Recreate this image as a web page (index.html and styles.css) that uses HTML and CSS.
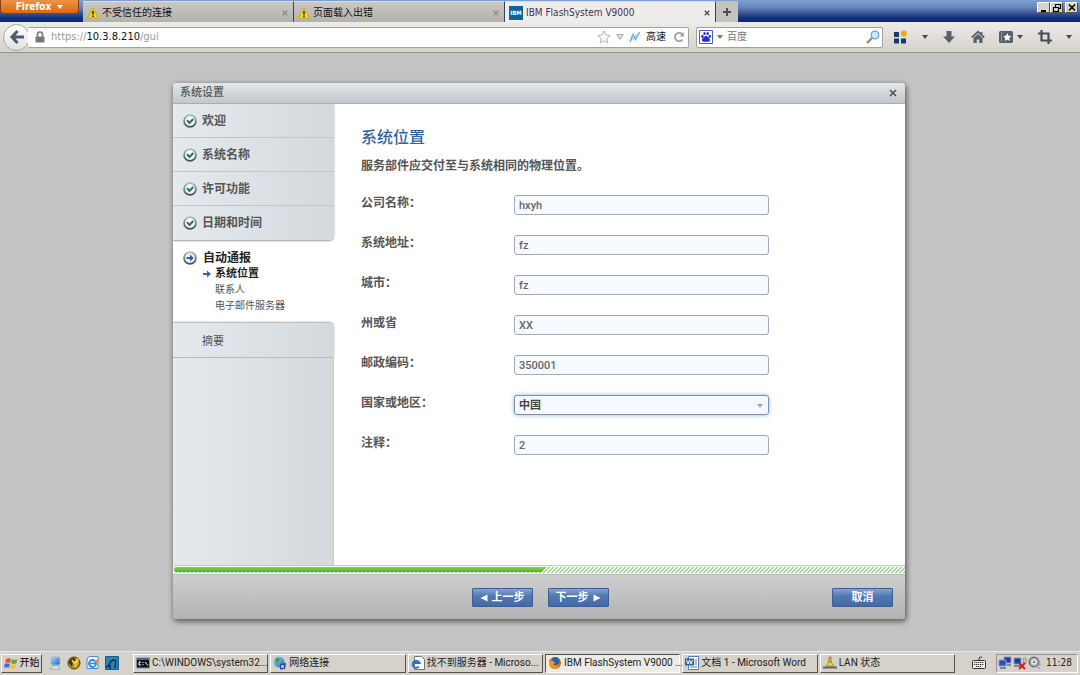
FILE: index.html
```html
<!DOCTYPE html>
<html lang="zh-CN">
<head>
<meta charset="utf-8">
<title>IBM FlashSystem V9000</title>
<link rel="stylesheet" href="styles.css">
</head>
<body>
<svg class="defs" aria-hidden="true">
  <defs>
    <linearGradient id="ring" x1="0" y1="0" x2="0" y2="1"><stop offset="0" stop-color="#b4b8bb"/><stop offset="1" stop-color="#4a4e52"/></linearGradient>
    <linearGradient id="sky" x1="0" y1="0" x2="1" y2="1"><stop offset="0" stop-color="#a8dcf8"/><stop offset="1" stop-color="#1c62c0"/></linearGradient>
    <symbol id="warn" viewBox="0 0 12 12"><path d="M6 1 11.5 11H.5Z" fill="#f8d80c" stroke="#c7a400" stroke-width=".8" stroke-linejoin="round"/><path d="M6 4v3.6M6 8.6v1.4" stroke="#222" stroke-width="1.5"/></symbol>
    <symbol id="check" viewBox="0 0 14 14"><circle cx="7" cy="7" r="5.9" fill="#f3f8f8" stroke="url(#ring)" stroke-width="1.8"/><path d="M4 6.2 6.5 9 10.2 5" fill="none" stroke="#23775c" stroke-width="2"/></symbol>
    <symbol id="down" viewBox="0 0 6 4"><path d="M0 0h6L3 4Z" fill="currentColor"/></symbol>
    <symbol id="x" viewBox="0 0 8 8"><path d="M1 1l6 6M7 1 1 7" stroke="currentColor" stroke-width="1.700"/></symbol>
  </defs>
</svg>

<header class="tabbar">
  <button class="firefox" type="button">Firefox <svg class="caret"><use href="#down"/></svg></button>
  <nav class="tabs">
    <div class="tab"><svg class="i12"><use href="#warn"/></svg><span class="tab-name">不受信任的连接</span><button class="tab-close" type="button" aria-label="关闭标签页"><svg class="i8"><use href="#x"/></svg></button></div>
    <div class="tab"><svg class="i12"><use href="#warn"/></svg><span class="tab-name">页面载入出错</span><button class="tab-close" type="button" aria-label="关闭标签页"><svg class="i8"><use href="#x"/></svg></button></div>
    <div class="tab tab-active"><span class="ibm">IBM</span><span class="tab-name">IBM FlashSystem V9000</span><button class="tab-close" type="button" aria-label="关闭标签页"><svg class="i8"><use href="#x"/></svg></button></div>
    <button class="tab-new" type="button" aria-label="新标签页"><svg class="i10" viewBox="0 0 10 10"><path d="M5 1v8M1 5h8" stroke="#4b535a" stroke-width="2"/></svg></button>
  </nav>
  <div class="win-controls">
    <button type="button" aria-label="最小化"><svg class="i10" viewBox="0 0 10 10"><path d="M2 8h5" stroke="#000" stroke-width="2"/></svg></button>
    <button type="button" aria-label="还原"><svg class="i10" viewBox="0 0 10 10"><path d="M3.5 4V1.5h5v4H7M1.5 4.5h5v4h-5zM3 1.5h6M1 4.5h6" fill="none" stroke="#000" stroke-width="1.2"/></svg></button>
    <button type="button" aria-label="关闭"><svg class="i10" viewBox="0 0 10 10"><path d="M2 1.500l6 6M8 1.500l-6 6" stroke="#000" stroke-width="1.600"/></svg></button>
  </div>
</header>

<div class="navbar">
  <button class="back" type="button" aria-label="后退"><svg class="i16" viewBox="0 0 16 16"><path d="M8.5 2 3 8l5.500 6M3 8h12" fill="none" stroke="#4a5d70" stroke-width="3"/></svg></button>
  <div class="url">
    <svg class="i12" viewBox="0 0 12 12"><path d="M3.500 6V3.500a2.500 2.500 0 0 1 5 0V6" fill="none" stroke="#777" stroke-width="1.6"/><rect x="1.500" y="5.500" width="9" height="6" rx="1" fill="#777"/></svg>
    <span class="address">https://<span class="host">10.3.8.210</span>/gui</span>
    <svg class="i14" viewBox="0 0 14 14"><path d="M7 1l1.800 4 4.400.5-3.300 3 1 4.400L7 10.700 3.100 12.900l1-4.400-3.300-3L5.200 5Z" fill="#fafafa" stroke="#b5b5b5"/></svg>
    <svg class="i8" viewBox="0 0 8 8"><path d="M.7 1.500h6.600L4 6.500Z" fill="#e0e0e0" stroke="#aaa"/></svg>
    <svg class="i12" viewBox="0 0 12 12"><path d="M1 11 4 3.500l2.500 5L10.500 1" fill="none" stroke="#64a5e4" stroke-width="1.500"/><path d="M4 3v6M7 3v5" stroke="#91c3f0"/></svg>
    <span class="speed">高速</span>
    <button class="bare" type="button" aria-label="重新载入"><svg class="i12" viewBox="0 0 12 12"><path d="M9.500 8.500A4.200 4.200 0 1 1 9 3" fill="none" stroke="#929ba4" stroke-width="1.700"/><path d="M10.800 1v4.500H6.500Z" fill="#929ba4"/></svg></button>
  </div>
  <label class="search">
    <svg class="i14" viewBox="0 0 14 14"><path d="M.5.5h13v13H.5z" fill="#fff" stroke="#4061bd"/><g fill="#252ed4"><ellipse cx="3.400" cy="6.300" rx="1.200" ry="1.600"/><ellipse cx="5.500" cy="3.500" rx="1.200" ry="1.600"/><ellipse cx="8.700" cy="3.500" rx="1.200" ry="1.600"/><ellipse cx="10.800" cy="6.300" rx="1.200" ry="1.600"/><path d="M7 6c1.700 0 4 2.500 4 4.200 0 2-2.500 1.500-4 1.500s-4 .5-4-1.500C3 8.500 5.300 6 7 6Z"/></g></svg>
    <svg class="caret"><use href="#down"/></svg>
    <input type="text" placeholder="百度" aria-label="搜索">
    <svg class="i14" viewBox="0 0 14 14"><path d="M1 13 6 8" stroke="#bb7a62" stroke-width="2.400"/><circle cx="9" cy="5" r="3.800" fill="#c8e9fa" stroke="#6ba1d0" stroke-width="1.300"/></svg>
  </label>
  <div class="tools">
    <button class="bare" type="button" aria-label="快速拨号"><svg class="i14" viewBox="0 0 14 14"><path d="M1 2h5v5H1zM1 8.500h5v5H1zM8 8.500h5v5H8z" fill="#183870"/><circle cx="10.800" cy="3.500" r="3" fill="#f5a21c"/></svg></button>
    <svg class="caret"><use href="#down"/></svg>
    <button class="bare" type="button" aria-label="下载"><svg class="i14" viewBox="0 0 14 14"><path d="M4.500 1h5v5.500H13L7 13 1 6.500h3.500Z" fill="#56616c"/></svg></button>
    <button class="bare" type="button" aria-label="主页"><svg class="i14" viewBox="0 0 14 14"><path d="M.8 7.500 7 1.700l6.200 5.800M10.500 2v3" fill="none" stroke="#56616c" stroke-width="1.800"/><path d="M2.500 8 7 4l4.500 4v5H8.300V9.500H5.700V13H2.500Z" fill="#56616c"/></svg></button>
    <button class="bare pair" type="button" aria-label="书签"><svg class="i14" viewBox="0 0 14 14"><rect y="1" width="14" height="12" rx="1.500" fill="#56616c"/><path d="M2.500 2v10" stroke="#8f99a2"/><path d="M8.300 3l1.200 2.700 3 .3-2.200 2 .6 3-2.600-1.600L5.700 11l.6-3-2.200-2 3-.3Z" fill="#fff"/></svg><svg class="caret"><use href="#down"/></svg></button>
    <button class="bare" type="button" aria-label="截图"><svg class="i14" viewBox="0 0 14 14"><path d="M3.500 0v10.500H14M0 3.500h10.500V14" fill="none" stroke="#464d54" stroke-width="2.200"/></svg></button>
    <svg class="caret"><use href="#down"/></svg>
  </div>
</div>

<main class="page">
  <section class="dialog">
    <header class="dialog-head"><span>系统设置</span><button class="bare" type="button" aria-label="关闭"><svg class="i8"><use href="#x"/></svg></button></header>
    <div class="dialog-body">
      <aside class="steps">
        <ul class="done">
          <li><svg class="i14"><use href="#check"/></svg>欢迎</li>
          <li><svg class="i14"><use href="#check"/></svg>系统名称</li>
          <li><svg class="i14"><use href="#check"/></svg>许可功能</li>
          <li><svg class="i14"><use href="#check"/></svg>日期和时间</li>
        </ul>
        <div class="current">
          <div class="current-name"><svg class="i14" viewBox="0 0 14 14"><circle cx="7" cy="7" r="5.900" fill="#eef3fa" stroke="url(#ring)" stroke-width="1.800"/><path d="M3.500 6H7V3.500L10.800 7 7 10.500V8H3.500Z" fill="#315fae"/></svg>自动通报</div>
          <ul class="substeps">
            <li class="sub-active"><svg class="i8" viewBox="0 0 8 8"><path d="M0 3h4V.5L8 4 4 7.500V5H0Z" fill="#3767ad"/></svg>系统位置</li>
            <li>联系人</li>
            <li>电子邮件服务器</li>
          </ul>
        </div>
        <div class="next-step">摘要</div>
        <div class="steps-rest"></div>
      </aside>
      <form class="content" id="location">
        <h1>系统位置</h1>
        <p>服务部件应交付至与系统相同的物理位置。</p>
        <div class="fields">
          <label for="company">公司名称：</label><input id="company" type="text" value="hxyh">
          <label for="addr">系统地址：</label><input id="addr" type="text" value="fz">
          <label for="city">城市：</label><input id="city" type="text" value="fz">
          <label for="state">州或省</label><input id="state" type="text" value="XX">
          <label for="zip">邮政编码：</label><input id="zip" type="text" value="350001">
          <label for="country">国家或地区：</label>
          <div class="select"><select id="country"><option>中国</option></select><svg class="caret"><use href="#down"/></svg></div>
          <label for="note">注释：</label><input id="note" type="text" value="2">
        </div>
      </form>
    </div>
    <div class="progress"><div class="track"><div class="bar"></div></div></div>
    <footer class="dialog-foot">
      <div class="pager">
        <button class="btn" type="button"><svg class="i8" viewBox="0 0 8 8"><path d="M7.500.5v7L.5 4Z" fill="#fff"/></svg>上一步</button>
        <button class="btn" type="button">下一步<svg class="i8" viewBox="0 0 8 8"><path d="M.5.500v7l7-3.500Z" fill="#fff"/></svg></button>
      </div>
      <button class="btn" type="button">取消</button>
    </footer>
  </section>
</main>

<footer class="taskbar">
  <button class="start" type="button"><svg class="i14" viewBox="0 0 14 14"><path d="M2 3q2.500-1.500 5 0L6 7Q3.500 5.500 1 7Z" fill="#e2552b"/><path d="M8 3.200q2.500 1.300 5.500 0l-1.200 4Q9.500 8.500 7 7.200Z" fill="#58aa3b"/><path d="M.8 8q2.500-1.500 5 0l-1 4Q2.500 10.500 0 12Z" fill="#3a70d3"/><path d="M6.800 8.200q2.500 1.300 5.300 0l-1 4q-2.800 1.300-5.300 0Z" fill="#f4c02c"/></svg>开始</button>
  <div class="quick">
    <svg class="i14" viewBox="0 0 14 14"><rect x="3" y="1" width="9" height="8" rx="1.500" fill="url(#sky)" stroke="#a7b9cc"/><path d="M5 10h5l2 3H2Z" fill="#e9eff6" stroke="#7591b5" stroke-width=".7"/></svg>
    <svg class="i14" viewBox="0 0 14 14"><circle cx="7" cy="7" r="6" fill="#b9950c" stroke="#4b3b07"/><path d="M2 7a5 5 0 0 1 5-5l3 3-4 1-1 5Z" fill="#3c3211"/><path d="M5 4l2 3 4-4-3 8" fill="none" stroke="#f4dc60" stroke-width="1.500"/></svg>
    <svg class="i14" viewBox="0 0 14 14"><path d="M3 .5h9v12H1V3Z" fill="#edf6ff" stroke="#5389cc"/><circle cx="6.500" cy="7.500" r="3.500" fill="none" stroke="#278be0" stroke-width="1.800"/><path d="M4 7.500h5" stroke="#278be0" stroke-width="1.500"/><path d="M8 6l5-4v4Z" fill="#e28857"/></svg>
    <svg class="i14" viewBox="0 0 14 14"><path d="M.5.500h13v13H.5z" fill="#2885b3" stroke="#145e85"/><path d="M1 11c4 0 3-7 8-7 3 0 1 5 1 8M5 9v4" fill="none" stroke="#0b304b" stroke-width="1.500"/></svg>
  </div>
  <div class="tasks">
    <button class="task" type="button"><svg class="i14" viewBox="0 0 14 14"><path d="M.5 2h13v10H.5z" fill="#111" stroke="#7195bf"/><path d="M1 3h12" stroke="#386baa" stroke-width="2"/><path d="M5 6H3v3h2M7 6v1M7 8v1M9 6l3 3.500" fill="none" stroke="#fff"/></svg><span>C:\WINDOWS\system32...</span></button>
    <button class="task" type="button"><svg class="i14" viewBox="0 0 14 14"><circle cx="6" cy="6" r="5.500" fill="url(#sky)"/><path d="M2 3q3-3 5 0L5 6 3 8Z" fill="#48a23d"/><path d="M7 8l6-1-1 6-5 .5Z" fill="#254b92"/><path d="M8 9h3v3H8z" fill="#8cc5ec"/></svg><span>网络连接</span></button>
    <button class="task" type="button"><svg class="i14" viewBox="0 0 14 14"><path d="M3.500.5h7l3 3v10h-10z" fill="#fff" stroke="#777"/><path d="M8 10.500A3.500 3.500 0 1 1 8.500 7H2" fill="none" stroke="#2173cb" stroke-width="2"/></svg><span>找不到服务器 - Microso...</span></button>
    <button class="task task-on" type="button"><svg class="i14" viewBox="0 0 14 14"><circle cx="7" cy="7" r="6" fill="#e66516"/><circle cx="7.500" cy="5" r="4" fill="#2769a7"/><path d="M1 3q1 2 4 2l2 2-2 2q3 2 6-1-1 5-5 5-5-1-5-6Z" fill="#f2941e"/></svg><span>IBM FlashSystem V9000 ...</span></button>
    <button class="task" type="button"><svg class="i14" viewBox="0 0 14 14"><path d="M3.500.5h10v13h-10z" fill="#fff" stroke="#557cb8"/><path d="M9.500 4H12M9.500 6H12M9.500 8H12M5 11h7" stroke="#557cb8"/><path d="M0 2.500h9v7H0z" fill="#3265b1"/><path d="M1.500 4l1.500 4 1.500-4L6 8l1.500-4" fill="none" stroke="#fff"/></svg><span>文档 1 - Microsoft Word</span></button>
    <button class="task" type="button"><svg class="i14" viewBox="0 0 14 14"><path d="M6 1h2v6H6z" fill="#f0c924" stroke="#7d6814" stroke-width=".7"/><path d="M3 10l3-4h2l3 4Z" fill="#f5d64b" stroke="#8a7218" stroke-width=".7"/><path d="M0 11.500h14" stroke="#596473" stroke-width="2"/></svg><span>LAN 状态</span></button>
  </div>
  <svg class="i14" viewBox="0 0 14 14"><path d="M7 4V2q0-1 3-1" fill="none" stroke="#333"/><rect x=".5" y="4.500" width="13" height="8" rx="1" fill="#eee" stroke="#333"/><path d="M2 6.500h10M2 8.500h10M4 10.500h6" stroke="#333" stroke-dasharray="1.300 .7"/></svg>
  <div class="tray">
    <svg class="i14" viewBox="0 0 14 14"><path d="M6 1h7v6H6z" fill="#223b9c" stroke="#8a99bd"/><path d="M1 4h7v6H1z" fill="#2c50bd" stroke="#8a99bd"/><path d="M2 12h6M9 9h4" stroke="#7f8797" stroke-width="2"/></svg>
    <svg class="i14" viewBox="0 0 14 14"><path d="M1 2h7v6H1z" fill="#223b9c" stroke="#8a99bd"/><path d="M1 10h6" stroke="#7f8797" stroke-width="2"/><path d="M10 2q2 2 0 5M12 1q3 3 0 7" fill="none" stroke="#888"/><path d="M6 7l6 6M12 7l-6 6" stroke="#d21b20" stroke-width="2"/></svg>
    <svg class="i14" viewBox="0 0 14 14"><circle cx="6" cy="6" r="4.700" fill="#bfc1c3" stroke="#666" stroke-width="1.500"/><circle cx="6" cy="6" r="2" fill="#888" stroke="#fff"/><path d="M8 10l4 3M11 5l1 5" stroke="#91a5d7" stroke-width="1.500"/></svg>
    <time>11:28</time>
  </div>
</footer>
</body>
</html>
```
FILE: styles.css
```css
* { box-sizing: border-box; }
body {
  margin: 0;
  min-height: 100vh;
  display: flex;
  flex-direction: column;
  background: #c3c3c4;
  color: #222;
  font: 10px/16px "DejaVu Sans Condensed", "Noto Sans", "Noto Sans CJK SC", sans-serif;
}
button, input, select { font: inherit; color: inherit; margin: 0; padding: 0; }
button { display: flex; align-items: center; justify-content: center; }
ul { list-style: none; margin: 0; padding: 0; }
svg { flex: none; display: block; }
.defs { position: absolute; width: 0; height: 0; }
.i8 { width: 8px; height: 8px; }
.i10 { width: 10px; height: 10px; }
.i12 { width: 12px; height: 12px; }
.i14 { width: 14px; height: 14px; }
.i16 { width: 16px; height: 16px; }
.caret { width: 6px; height: 4px; }
.bare { border: 0; background: none; }

.tabbar {
  height: 22px;
  display: flex;
  align-items: flex-start;
  background: linear-gradient(#7ba2d3, #6784b8 35%, #16317b 80%, #0c256b);
}
.firefox {
  width: 79px;
  height: 14px;
  gap: 6px;
  border: 1px solid #923f05;
  border-top: 0;
  border-radius: 0 0 4px 4px;
  background: linear-gradient(#ee9345, #db6b0e);
  color: #fff;
  font-weight: bold;
}
.tabs { flex: 0 1 655px; margin: 1px 0 0 4px; display: flex; height: 21px; min-width: 0; }
.tab {
  flex: 1;
  min-width: 0;
  display: flex;
  align-items: center;
  gap: 3px;
  padding: 1px 5px 0 4px;
  border-right: 1px solid #30436d;
  border-top: 1px solid #dddcd7;
  background: linear-gradient(#cac8c3, #b4b1aa);
  color: #111;
}
.tab-active { background: #eeedeb; color: #44304b; }
.tab-name { flex: 1; white-space: nowrap; overflow: hidden; }
.tab-close { border: 0; background: none; color: #8b8985; }
.tab-close svg { width: 6px; height: 6px; }
.tab-active .tab-close { color: #45474a; }
.ibm { width: 14px; height: 14px; background: #0e6595; color: #fff; font: bold 6px/14px "DejaVu Sans Condensed", sans-serif; text-align: center; }
.tab-new { width: 22px; border: 0; background: #c5c3be; }
.win-controls { margin-left: auto; display: flex; padding: 2px 2px 0 0; }
.win-controls button { width: 13px; height: 11px; background: #d8d4cc; border: 1px solid; border-color: #fff #55524d #55524d #fff; }
.win-controls button:last-child { margin-left: 2px; }

.navbar {
  height: 31px;
  display: flex;
  align-items: center;
  padding: 0 8px 0 3px;
  background: linear-gradient(#ecebe8, #d6d2cb);
  border-bottom: 1px solid #96938d;
}
.back { width: 27px; height: 27px; border: 1px solid #a9a7a3; border-radius: 50%; background: linear-gradient(#fff, #e4e2de); flex: none; }
.url, .search { height: 21px; display: flex; align-items: center; background: #fff; border: 1px solid #a3a19e; border-radius: 2px; }
.url { flex: 665; min-width: 0; gap: 5px; padding: 0 3px 0 6px; margin-left: -2px; border-left: 0; }
.address { flex: 1; color: #999; font-size: 11px; }
.host, .speed { color: #111; }
.url .bare { margin-left: 2px; }
.search { flex: 185; min-width: 0; margin-left: 7px; padding: 0 2px; gap: 4px; color: #777; }
.search input { flex: 1; min-width: 0; border: 0; outline: 0; background: none; }
.search input::placeholder { color: #777; opacity: 1; }
.tools { flex: 0 0 189px; display: flex; align-items: center; justify-content: space-between; padding-left: 10px; color: #454b52; }
.pair { gap: 4px; }

.page { flex: 1; display: flex; padding: 30px 175px 32px 173px; }
.dialog {
  flex: 1;
  min-width: 0;
  display: flex;
  flex-direction: column;
  border-radius: 4px;
  overflow: hidden;
  background: #fff;
  box-shadow: 1px 2px 5px 1px #666;
  color: #555;
}
.dialog-head {
  height: 21px;
  display: flex;
  align-items: center;
  justify-content: space-between;
  padding: 0 8px 0 7px;
  background: linear-gradient(#e3e7e9, #c1c8cb);
  border-bottom: 1px solid #a8afb2;
  font-size: 11px;
  font-weight: 500;
}
.dialog-body { flex: 1; display: flex; font-size: 12px; font-weight: bold; }
.steps { width: 161px; flex: none; display: flex; flex-direction: column; }
.done, .next-step, .steps-rest { background: linear-gradient(90deg, #e4e9ed, #d3d9dc); }
.done { border-radius: 0 0 5px 0; box-shadow: 0 1px 2px #999; }
.done li { height: 34px; display: flex; align-items: center; gap: 5px; padding: 0 0 0 10px; border-bottom: 1px solid #c0c6ca; }
.done li:last-child { border-bottom: 0; }
.current { height: 83px; padding: 10px 0 0 10px; }
.current-name { display: flex; align-items: center; gap: 6px; color: #222; }
.substeps { padding-left: 32px; font-size: 10px; font-weight: normal; }
.sub-active { display: flex; align-items: center; gap: 4px; margin-left: -12px; color: #222; font-size: 11px; font-weight: bold; }
.next-step { height: 35px; padding: 11px 0 0 29px; border-radius: 0 5px 0 0; border-bottom: 1px solid #b5bcc0; box-shadow: 0 -1px 2px #aaa; font-size: 11px; font-weight: normal; }
.steps-rest { flex: 1; border-right: 1px solid #c5cbce; }
.content { flex: 1; min-width: 0; padding: 24px 27px 0; }
h1 { margin: 0 0 8px; font-size: 16px; line-height: 20px; font-weight: 500; color: #3163a0; }
p { margin: 0 0 19px; line-height: 20px; }
.fields { display: grid; grid-template-columns: 153px minmax(0, 255px); grid-auto-rows: 20px; row-gap: 20px; }
.fields label { line-height: 16px; }
.fields input, .select select {
  width: 100%;
  height: 20px;
  padding: 0 4px;
  border: 1px solid #a2abb9;
  border-radius: 3px;
  background: #f6f9fe;
  color: #666;
  font: 500 11px "Roboto", "Noto Sans CJK SC", sans-serif;
}
.select { position: relative; }
.fields .select select { display: block; appearance: none; border-color: #7993b5; box-shadow: 0 0 4px #8eb4df; color: #444; font-weight: bold; }
.select .caret { position: absolute; right: 6px; top: 9px; color: #9ba9bb; pointer-events: none; }
.progress { padding: 1px 0 1px 1px; border-top: 1px solid #c6cacc; background: #f4f6f4; }
.track { height: 6px; background: linear-gradient(135deg, #fff 37%, #a3da8f 37% 50%, #fff 50% 87%, #a3da8f 87%) 0 0 / 4px 4px; }
.bar { width: 51%; height: 5px; border-radius: 2px 0 0 2px; background: linear-gradient(#80d851, #52b51f); clip-path: polygon(0 0, 100% 0, calc(100% - 5px) 100%, 0 100%); }
.dialog-foot { height: 45px; display: grid; grid-template-columns: 1fr auto 1fr; align-items: center; padding: 1px 12px 0 0; background: linear-gradient(#d0cfd0, #b3b2b3); border-top: 1px solid #bbb; }
.pager { grid-column: 2; display: flex; gap: 15px; padding-left: 14px; }
.dialog-foot > .btn { justify-self: end; }
.btn { width: 61px; height: 19px; gap: 4px; border: 1px solid #3c5c92; border-radius: 1px; background: linear-gradient(#83a5d3, #5279b5 40%, #416aa8); color: #fff; font-size: 11px; font-weight: bold; }

.taskbar { height: 24px; display: flex; align-items: center; gap: 10px; padding: 1px 2px 2px 1px; background: #d6d2ca; border-top: 1px solid #ebe9e5; color: #222; }
.start, .task { height: 19px; border: 1px solid; border-color: #fff #55524d #55524d #fff; background: #d6d2ca; }
.start { width: 41px; flex: none; gap: 2px; white-space: nowrap; color: #000; }
.quick { display: flex; gap: 5px; margin-left: -4px; }
.tasks { flex: 1; min-width: 0; display: flex; gap: 2px; margin: 0 7px 0 4px; font-family: "Roboto", "Noto Sans CJK SC", sans-serif; }
.task { flex: 1; min-width: 0; justify-content: flex-start; gap: 2px; padding: 0 0 0 2px; white-space: nowrap; }
.task-on { border-color: #55524d #fff #fff #55524d; background: #edebe7; }
.tray { height: 19px; width: 82px; flex: none; display: flex; align-items: center; gap: 1px; padding: 0 5px 0 1px; border: 1px solid; border-color: #97948e #fff #fff #97948e; }
.tray time { margin-left: auto; }
```
